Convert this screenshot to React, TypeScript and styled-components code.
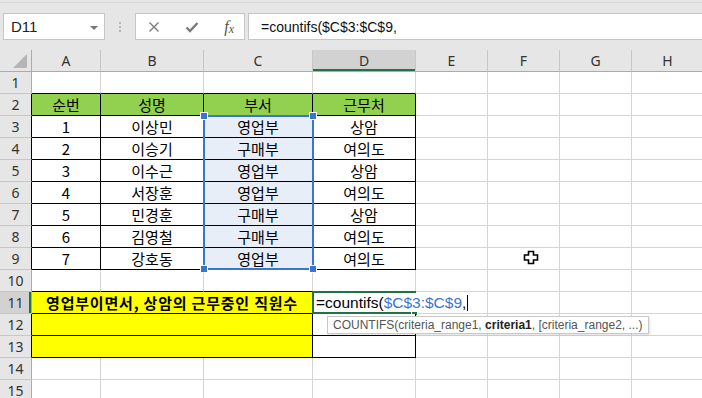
import React from "react";
import styled, { createGlobalStyle } from "styled-components";

const GlobalStyle = createGlobalStyle`
  html, body {
    margin: 0;
    padding: 0;
    background: #fff;
    overflow: hidden;
  }
`;

const BLACK = "#000";
const GRID = "#d4d4d4";
const GREEN = "#217346";
const BLUE = "#3b74cc";

const headers = ["순번", "성명", "부서", "근무처"];
const people = [
  ["1", "이상민", "영업부", "상암"],
  ["2", "이승기", "구매부", "여의도"],
  ["3", "이수근", "영업부", "상암"],
  ["4", "서장훈", "영업부", "여의도"],
  ["5", "민경훈", "구매부", "상암"],
  ["6", "김영철", "구매부", "여의도"],
  ["7", "강호동", "영업부", "여의도"],
];
const columns = ["A", "B", "C", "D", "E", "F", "G", "H"];
const rowNumbers = Array.from({ length: 15 }, (_, i) => i + 1);

export default function App() {
  return (
    <>
      <GlobalStyle />
      <Window>
        <FormulaBar>
          <NameBox>
            <span>D11</span>
            <DropArrow />
          </NameBox>
          <Dots>
            <i />
            <i />
            <i />
          </Dots>
          <FuncBox>
            <svg width="12" height="12" viewBox="0 0 12 12">
              <path d="M1.5 1.5 L10.5 10.5 M10.5 1.5 L1.5 10.5" stroke="#7a7a7a" strokeWidth="1.4" />
            </svg>
            <svg width="14" height="12" viewBox="0 0 14 12">
              <path d="M1.5 6.5 L5 10 L12.5 2" stroke="#7a7a7a" strokeWidth="2.4" fill="none" />
            </svg>
            <Fx>
              f<sub>x</sub>
            </Fx>
          </FuncBox>
          <FormulaInput>=countifs($C$3:$C$9,</FormulaInput>
        </FormulaBar>

        <SheetArea>
          <Sheet>
            <Corner>
              <Triangle />
            </Corner>
            {columns.map((c) => (
              <ColHeader key={c} $active={c === "D"}>
                {c}
              </ColHeader>
            ))}

            {rowNumbers.map((r) => {
              const inTable = r >= 2 && r <= 9;
              const inBox = r >= 11 && r <= 13;
              const edgeAbove = r === 1 || r === 10;
              const line = inTable || inBox || edgeAbove ? BLACK : GRID;
              const side = inTable || inBox ? BLACK : GRID;
              return (
                <React.Fragment key={r}>
                  <RowHeader $active={r === 11} $edge={inTable || r === 12 || r === 13}>
                    {r}
                  </RowHeader>
                  {inBox ? (
                    <>
                      <Cell $span={3} $fill="#ffff00" $bold $right={BLACK} $bottom={BLACK}>
                        {r === 11 ? "영업부이면서, 상암의 근무중인 직원수" : ""}
                      </Cell>
                      <Cell $right={BLACK} $bottom={BLACK} $overflow={r !== 13}>
                        {r === 11 && (
                          <>
                            <ActiveCell>
                              <FillHandle />
                            </ActiveCell>
                            <Editor>
                              =countifs(<RefText>$C$3:$C$9</RefText>,<Caret />
                            </Editor>
                          </>
                        )}
                        {r === 12 && (
                          <Tip>
                            COUNTIFS(criteria_range1,{" "}<b>criteria1</b>,{" "}[criteria_range2, ...)
                          </Tip>
                        )}
                      </Cell>
                    </>
                  ) : (
                    ["A", "B", "C", "D"].map((c, i) => {
                      let text = "";
                      let fill: string | undefined;
                      if (r === 2) {
                        text = headers[i];
                        fill = "#92d050";
                      } else if (inTable) {
                        text = people[r - 3][i];
                        if (c === "C") fill = "#e8eef8";
                      }
                      const selTop = c === "C" && r === 3;
                      return (
                        <Cell key={c} $fill={fill} $right={side} $bottom={line} $overflow={selTop}>
                          {text}
                          {selTop && (
                            <Selection>
                              <Handle $x="left" $y="top" />
                              <Handle $x="right" $y="top" />
                              <Handle $x="left" $y="bottom" />
                              <Handle $x="right" $y="bottom" />
                            </Selection>
                          )}
                        </Cell>
                      );
                    })
                  )}
                  <Cell />
                  <Cell $overflow={r === 9}>{r === 9 && <Pointer />}</Cell>
                  <Cell />
                  <Cell />
                </React.Fragment>
              );
            })}
          </Sheet>
        </SheetArea>
      </Window>
    </>
  );
}

const Pointer = () => (
  <PointerSvg width="16" height="15" viewBox="0 0 16 15">
    <path
      d="M5.5 1.5 H10.5 V5 H14.5 V10 H10.5 V13.5 H5.5 V10 H1.5 V5 H5.5 Z"
      fill="#fff"
      stroke="#000"
      strokeWidth="1.6"
      strokeLinejoin="miter"
    />
  </PointerSvg>
);

const Window = styled.div`
  width: 702px;
  height: 398px;
  overflow: hidden;
  display: flex;
  flex-direction: column;
  background: #e6e6e6;
`;

const FormulaBar = styled.div`
  height: 38px;
  margin-top: 2px;
  box-sizing: border-box;
  padding: 10px 0 0 3px;
  display: flex;
  align-items: flex-start;
  border-top: 1px solid #d9d9d9;
`;

const Box = styled.div`
  height: 27px;
  box-sizing: border-box;
  background: #fff;
  border: 1px solid #c6c6c6;
  display: flex;
  align-items: center;
`;

const NameBox = styled(Box)`
  width: 102px;
  padding: 0 6px 0 7px;
  justify-content: space-between;
  font-family: "Liberation Sans", Arial, sans-serif;
  font-size: 15px;
  color: #222;
`;

const DropArrow = styled.span`
  width: 0;
  height: 0;
  border-left: 4px solid transparent;
  border-right: 4px solid transparent;
  border-top: 4px solid #777;
  margin-top: 2px;
`;

const Dots = styled.div`
  width: 30px;
  height: 27px;
  display: flex;
  flex-direction: column;
  align-items: center;
  justify-content: center;
  gap: 2px;

  i {
    width: 2px;
    height: 2px;
    background: #b5b5b5;
  }
`;

const FuncBox = styled(Box)`
  width: 110px;
  padding: 0 10px 0 12px;
  justify-content: space-between;
`;

const Fx = styled.span`
  font-family: "Liberation Serif", "Times New Roman", serif;
  font-style: italic;
  font-size: 16px;
  color: #555;
  line-height: 1;

  sub {
    font-size: 12px;
    vertical-align: baseline;
    position: relative;
    top: 1px;
  }
`;

const FormulaInput = styled(Box)`
  flex: 1;
  margin-left: 3px;
  border-right: none;
  padding-left: 12px;
  font-family: "Liberation Sans", Arial, sans-serif;
  font-size: 14px;
  color: #111;
`;

const SheetArea = styled.div`
  flex: 1;
  padding-top: 10px;
  overflow: hidden;
`;

const Sheet = styled.div`
  display: grid;
  grid-template-columns: 32px 69px 103px 109px 103px 72px 72px 72px 72px;
  grid-auto-rows: 22px;
  background: #fff;
  font-family: "Noto Sans CJK KR", "Malgun Gothic", sans-serif;
  font-size: 15px;
  color: #000;
`;

const HeaderBase = styled.div`
  box-sizing: border-box;
  background: #e6e6e6;
  display: flex;
  align-items: center;
  justify-content: center;
  font-family: "Noto Sans", "Liberation Sans", sans-serif;
  font-size: 14px;
  color: #333;
`;

const Corner = styled(HeaderBase)`
  align-items: flex-end;
  justify-content: flex-end;
  padding: 0 4px 3px 0;
  border-right: 1px solid #ababab;
  border-bottom: 1px solid #ababab;
`;

const Triangle = styled.span`
  width: 0;
  height: 0;
  border-left: 14px solid transparent;
  border-bottom: 14px solid #b5b5b5;
`;

const ColHeader = styled(HeaderBase)<{ $active?: boolean }>`
  border-right: 1px solid #c6c6c6;
  border-bottom: 1px solid #ababab;
  background: ${(p) => (p.$active ? "#d2d2d2" : "#e6e6e6")};
  box-shadow: ${(p) => (p.$active ? `inset 0 -2px 0 ${GREEN}` : "none")};
  padding-bottom: 1px;
`;

const RowHeader = styled(HeaderBase)<{ $active?: boolean; $edge?: boolean }>`
  border-right: 1px solid ${(p) => (p.$edge ? BLACK : "#ababab")};
  border-bottom: 1px solid #c6c6c6;
  background: ${(p) => (p.$active ? "#d2d2d2" : "#e6e6e6")};
  box-shadow: ${(p) => (p.$active ? `inset -2px 0 0 ${GREEN}` : "none")};
`;

const Cell = styled.div<{
  $span?: number;
  $fill?: string;
  $right?: string;
  $bottom?: string;
  $bold?: boolean;
  $overflow?: boolean;
}>`
  grid-column: span ${(p) => p.$span ?? 1};
  box-sizing: border-box;
  position: relative;
  background: ${(p) => p.$fill ?? "#fff"};
  border-right: 1px solid ${(p) => p.$right ?? GRID};
  border-bottom: 1px solid ${(p) => p.$bottom ?? GRID};
  display: flex;
  align-items: center;
  justify-content: center;
  line-height: 21px;
  white-space: nowrap;
  font-weight: ${(p) => (p.$bold ? 700 : 400)};
  letter-spacing: ${(p) => (p.$bold ? "0.8px" : "0")};
  overflow: ${(p) => (p.$overflow ? "visible" : "hidden")};
  z-index: ${(p) => (p.$overflow ? 3 : "auto")};
`;

const Editor = styled.span`
  position: absolute;
  left: 3px;
  top: 1px;
  height: 19px;
  display: flex;
  align-items: center;
  background: #fff;
  padding-right: 4px;
  font-family: "Liberation Sans", Arial, sans-serif;
  font-size: 15.5px;
  color: #000;
  z-index: 7;
`;

const RefText = styled.span`
  color: ${BLUE};
`;

const Caret = styled.i`
  display: inline-block;
  width: 1px;
  height: 16px;
  background: #000;
  margin-left: 1px;
`;

const Tip = styled.div`
  position: absolute;
  left: 14px;
  top: 2px;
  height: 18px;
  box-sizing: border-box;
  padding: 0 5px;
  display: flex;
  align-items: center;
  background: #fff;
  border: 1px solid #c8c8c8;
  box-shadow: 1px 1px 2px rgba(0, 0, 0, 0.12);
  font-family: "Liberation Sans", Arial, sans-serif;
  font-size: 12px;
  color: #555;
  white-space: pre;
  z-index: 5;

  b {
    color: #222;
  }
`;

const Selection = styled.div`
  position: absolute;
  left: -1px;
  top: -1px;
  width: 111px;
  height: 155px;
  box-sizing: border-box;
  border: 2px solid ${BLUE};
  pointer-events: none;
`;

const Handle = styled.span<{ $x: "left" | "right"; $y: "top" | "bottom" }>`
  position: absolute;
  ${(p) => p.$x}: -5px;
  ${(p) => p.$y}: -5px;
  width: 6px;
  height: 6px;
  background: ${BLUE};
  border: 1px solid #fff;
`;

const ActiveCell = styled.div`
  position: absolute;
  left: -1px;
  top: -1px;
  right: -1px;
  bottom: -1px;
  border: 2px solid ${GREEN};
  pointer-events: none;
  z-index: 6;
`;

const FillHandle = styled.span`
  position: absolute;
  right: -4px;
  bottom: -4px;
  width: 5px;
  height: 5px;
  background: ${GREEN};
  border: 1px solid #fff;
`;

const PointerSvg = styled.svg`
  position: absolute;
  left: 35px;
  top: 2px;
`;
